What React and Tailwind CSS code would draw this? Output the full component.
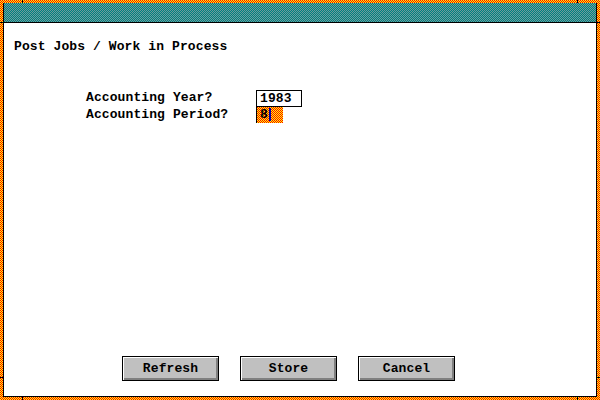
function Checker({ id, a, b }) {
  return (
    <svg className="absolute inset-0 w-full h-full" shapeRendering="crispEdges" aria-hidden="true">
      <defs>
        <pattern id={id} width="2" height="2" patternUnits="userSpaceOnUse">
          <rect width="2" height="2" fill={a} />
          <rect x="1" width="1" height="1" fill={b} />
          <rect y="1" width="1" height="1" fill={b} />
        </pattern>
      </defs>
      <rect width="100%" height="100%" fill={`url(#${id})`} />
    </svg>
  );
}

function Tick({ className }) {
  return <div className={`absolute bg-black ${className}`} />;
}

function Button({ children }) {
  return (
    <button className="w-[97px] h-[25px] border border-black bg-[#c0c0c0] shadow-[inset_1px_1px_0_#fff,inset_-2px_-2px_0_#808080] text-[13px] font-bold text-black">
      {children}
    </button>
  );
}

export default function App() {
  return (
    <div className="relative w-[600px] h-[400px] p-[3px] font-['Liberation_Mono',monospace] text-black">
      <Checker id="frame" a="#ff0000" b="#ffff00" />

      {/* resize handle marks on the frame */}
      <Tick className="left-[22px] top-0 w-px h-[3px]" />
      <Tick className="left-[577px] top-0 w-px h-[3px]" />
      <Tick className="left-[22px] bottom-0 w-px h-[3px]" />
      <Tick className="left-[577px] bottom-0 w-px h-[3px]" />
      <Tick className="left-0 top-[22px] w-[3px] h-px" />
      <Tick className="left-0 top-[377px] w-[3px] h-px" />
      <Tick className="right-0 top-[22px] w-[3px] h-px" />
      <Tick className="right-0 top-[377px] w-[3px] h-px" />

      <div className="relative flex flex-col h-full border-x border-b border-black bg-white">
        <div className="relative h-[20px] shrink-0 border-b border-black">
          <Checker id="title" a="#008080" b="#6f9c9c" />
        </div>

        <div className="flex flex-col flex-1 tracking-[0.1px]">
          <div className="pl-[10px] pt-[16px] h-[32px] text-[13px] leading-[16px] font-bold">
            Post Jobs / Work in Process
          </div>

          <div className="mt-[35px] pl-[82px] grid grid-cols-[170px_auto] text-[13px] font-bold">
            <div className="h-[17px] leading-[16px]">Accounting Year?</div>
            <div className="h-[17px] w-[46px] border border-black pl-[3px] leading-[15px]">1983</div>
            <div className="h-[16px] leading-[16px]">Accounting Period?</div>
            <div className="relative h-[16px] w-[27px] border-l border-black">
              <Checker id="period" a="#ff0000" b="#ffff00" />
              <span className="absolute left-[3px] top-0 leading-[16px]">8</span>
              <span className="absolute left-[12px] top-[1px] w-[2px] h-[13px] bg-[#0000a8]" />
            </div>
          </div>

          <div className="mt-auto mb-[15px] pl-[118px] flex gap-[21px]">
            <Button>Refresh</Button>
            <Button>Store</Button>
            <Button>Cancel</Button>
          </div>
        </div>
      </div>
    </div>
  );
}
